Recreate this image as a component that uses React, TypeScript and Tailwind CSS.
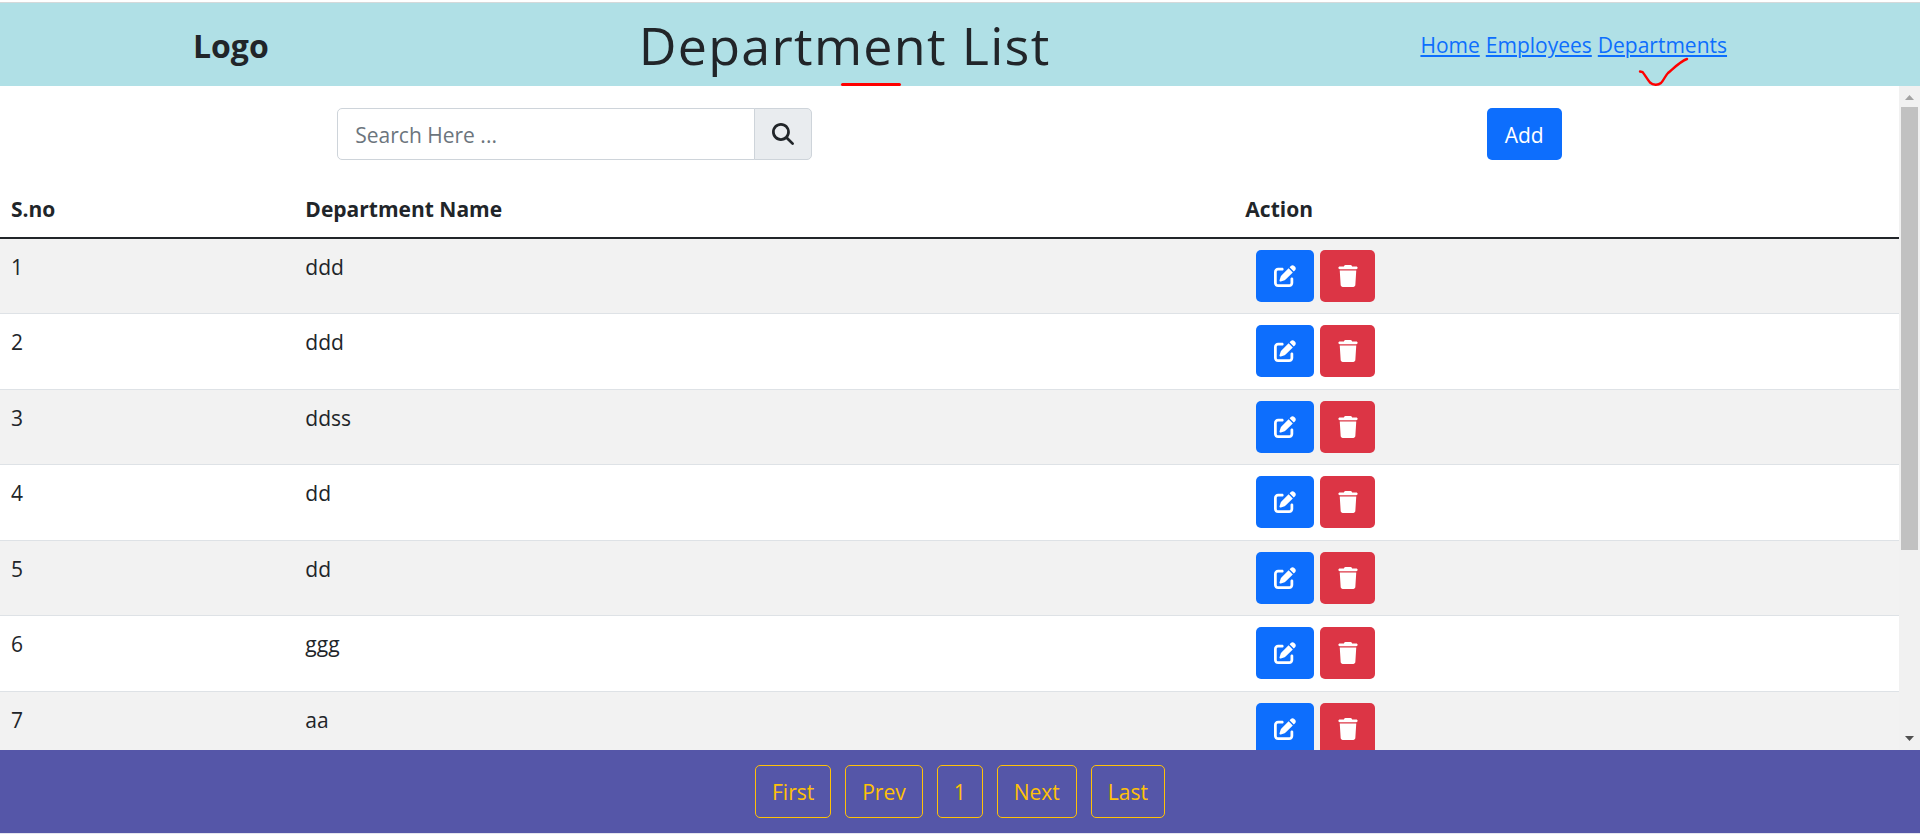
import React from 'react';
import { FaMagnifyingGlass, FaPenToSquare, FaTrash } from 'react-icons/fa6';

const departments = ['ddd', 'ddd', 'ddss', 'dd', 'dd', 'ggg', 'aa'];
const pages = ['First', 'Prev', '1', 'Next', 'Last'];

function Header() {
  return (
    <header className="mt-[2px] flex h-[84px] shrink-0 items-center justify-around border-t border-[#d5d9da] bg-[#b0e0e6] px-2">
      <div className="pt-[2px] text-[32px] font-bold">Logo</div>
      <h1 className="relative text-[52px] leading-[83px] tracking-wide whitespace-nowrap">
        Department List
        <span className="absolute bottom-0 left-[202px] h-[3px] w-[60px] rounded-full bg-[#fe0000]" />
      </h1>
      <nav className="flex gap-[6px] pt-[2px] text-[#0d6efd]">
        <a href="#home" className="underline">Home</a>
        <a href="#employees" className="underline">Employees</a>
        <a href="#departments" className="relative underline">
          Departments
          <svg className="absolute top-[28px] left-[40px]" width="52" height="30" fill="none" stroke="#fe0000" strokeWidth="2.4" strokeLinecap="round" aria-hidden="true">
            <path d="M2 14.500L4.500 15C7 18 9 22 12 25.500C15 28.300 20 28.500 23 26C26 23 27 19 30 16C37 10 43 4 49 2" />
          </svg>
        </a>
      </nav>
    </header>
  );
}

function ScrollTrack() {
  return (
    <div className="flex w-[21px] shrink-0 flex-col items-center bg-[#f1f1f1]" aria-hidden="true">
      <svg width="21" height="21" viewBox="0 0 21 21"><path d="M6 14L10.500 9L15 14Z" fill="#a3a3a3" /></svg>
      <div className="flex min-h-0 w-full flex-1 flex-col items-center">
        <div className="h-[71.300%] w-[17px] bg-[#c1c1c1]" />
      </div>
      <svg width="21" height="21" viewBox="0 0 21 21"><path d="M6 7L15 7L10.500 12Z" fill="#505050" /></svg>
    </div>
  );
}

export default function App() {
  return (
    <div className="flex h-screen flex-col bg-white font-['Open_Sans','Noto_Sans',sans-serif] text-[21px] leading-[33px] text-[#212529]">
      <Header />
      <div className="flex min-h-0 flex-1">
        <main className="min-w-0 flex-1 overflow-hidden">
          <div className="flex justify-around pt-[22px] pb-[22px]">
            <div className="flex h-[52px] w-1/4">
              <input
                type="text"
                aria-label="Search departments"
                placeholder="Search Here ..."
                className="min-w-0 flex-1 rounded-l-[5px] border border-[#ced4da] px-[17px] pt-[2px] placeholder:text-[#6c757d]"
              />
              <button type="button" aria-label="Search" className="-ml-px flex w-[58px] items-center justify-center rounded-r-[5px] border border-[#ced4da] bg-[#e9ecef]">
                <FaMagnifyingGlass size={22} />
              </button>
            </div>
            <button type="button" className="h-[52px] rounded-[5px] bg-[#0d6efd] px-[18px] pt-[2px] text-white">Add</button>
          </div>
          <table className="w-full table-fixed text-left">
            <thead>
              <tr className="h-[56px] border-b-2 border-[#212529]">
                <th className="w-[15.500%] px-[11px]">S.no</th>
                <th className="w-[49.500%] px-[11px]">Department Name</th>
                <th className="px-[11px]">Action</th>
              </tr>
            </thead>
            <tbody>
              {departments.map((name, i) => (
                <tr key={i} className="h-[75px] border-b border-[#dee2e6] align-top odd:bg-[#f2f2f2] even:h-[76px]">
                  <td className="px-[11px] pt-[12px]">{i + 1}</td>
                  <td className="px-[11px] pt-[12px]">{name}</td>
                  <td className="px-[22px] pt-[11px]">
                    <div className="flex gap-[6px]">
                      <button type="button" aria-label="Edit" className="flex h-[52px] w-[58px] items-center justify-center rounded-[5px] bg-[#0d6efd] text-white">
                        <FaPenToSquare size={22} />
                      </button>
                      <button type="button" aria-label="Delete" className="flex h-[52px] w-[55px] items-center justify-center rounded-[5px] bg-[#dc3545] text-white">
                        <FaTrash size={22} />
                      </button>
                    </div>
                  </td>
                </tr>
              ))}
            </tbody>
          </table>
        </main>
        <ScrollTrack />
      </div>
      <footer className="flex h-[84px] shrink-0 items-center justify-center gap-[14px] border-b border-[#e4e4ee] bg-[#5556a8]">
        {pages.map((p) => (
          <button key={p} type="button" className="h-[53px] rounded-[5px] border border-[#ffc107] px-4 pt-[2px] text-[#ffc107]">{p}</button>
        ))}
      </footer>
    </div>
  );
}
